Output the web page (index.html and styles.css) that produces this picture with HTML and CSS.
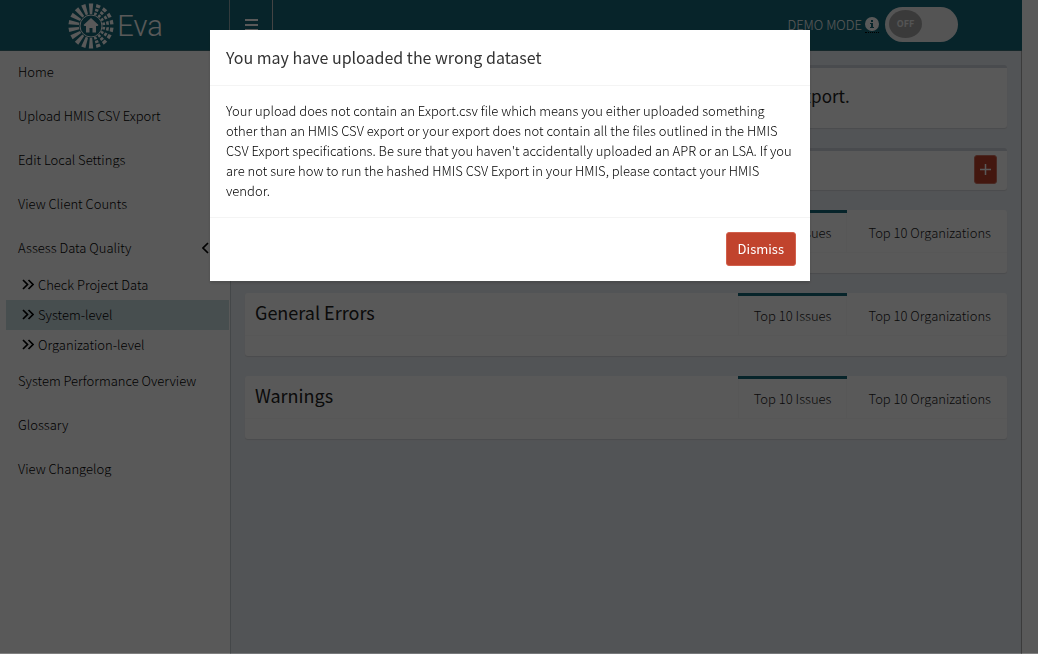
FILE: index.html
```html
<!DOCTYPE html>
<html lang="en">
<head>
<meta charset="utf-8">
<title>Eva</title>
<link rel="stylesheet" href="styles.css">
</head>
<body>
<div class="app">
  <header class="topbar">
    <a class="logo" href="#">
      <svg class="logo-mark" viewBox="-23 -23 46 46" aria-hidden="true">
        <defs>
          <path id="ray" d="M-1.2-12L-2.2-22.5H2.2L1.2-12Z"/>
          <path id="split" d="M-1.2-11.5L-1.4-14.2H1.4L1.2-11.5ZM-1.5-15.4L-1.8-18H1.8L1.5-15.4ZM-1.9-19.2L-2.3-22.5H2.3L1.9-19.2Z"/>
        </defs>
        <circle r="11" fill="none" stroke="#fff" stroke-width="1"/>
        <g fill="#fff">
          <use href="#ray"/>
          <use href="#split" transform="rotate(20)"/>
          <use href="#split" transform="rotate(40)"/>
          <use href="#split" transform="rotate(60)"/>
          <use href="#split" transform="rotate(80)"/>
          <use href="#split" transform="rotate(100)"/>
          <use href="#split" transform="rotate(120)"/>
          <use href="#split" transform="rotate(140)"/>
          <use href="#split" transform="rotate(160)"/>
          <use href="#ray" transform="rotate(180)"/>
          <use href="#ray" transform="rotate(200)"/>
          <use href="#ray" transform="rotate(220)"/>
          <use href="#ray" transform="rotate(240)"/>
          <use href="#ray" transform="rotate(260)"/>
          <use href="#ray" transform="rotate(280)"/>
          <use href="#ray" transform="rotate(300)"/>
          <use href="#ray" transform="rotate(320)"/>
          <use href="#ray" transform="rotate(340)"/>
          <path d="M0-8L7.5-1L6.5 0H5V6.5H1.5V2H-1.5V6.5H-5V0H-6.5L-7.5-1Z"/>
        </g>
      </svg>
      <span>Eva</span>
    </a>
    <button class="menu-toggle" type="button" aria-label="Toggle navigation">
      <svg viewBox="0 0 13 12" aria-hidden="true"><path fill="#fff" d="M0 0h13v2H0zM0 5h13v2H0zM0 10h13v2H0z"/></svg>
    </button>
    <div class="demo">
      <label for="demo-mode">DEMO MODE</label>
      <span class="info">
        <svg viewBox="0 0 14 14" aria-hidden="true"><circle cx="7" cy="7" r="7" fill="#fff"/><path fill="#16697a" d="M6 3h2v2H6zM5 6h3v4h1v1H5v-1h1V7H5z"/></svg>
      </span>
      <span class="switch">
        <input type="checkbox" id="demo-mode">
        <span class="knob">OFF</span>
      </span>
    </div>
  </header>

  <div class="columns">
    <nav class="sidebar">
      <a href="#">Home</a>
      <a href="#">Upload HMIS CSV Export</a>
      <a href="#">Edit Local Settings</a>
      <a href="#">View Client Counts</a>
      <a class="parent" href="#">Assess Data Quality
        <svg class="chevron" viewBox="0 0 7 12" aria-hidden="true"><path d="M6 1L1 6L6 11"/></svg>
      </a>
      <div class="submenu">
        <a href="#"><svg viewBox="0 0 12 11" aria-hidden="true"><path d="M1 1L5.5 5.5L1 10M6.5 1L11 5.5L6.5 10"/></svg>Check Project Data</a>
        <a class="active" href="#"><svg viewBox="0 0 12 11" aria-hidden="true"><path d="M1 1L5.5 5.5L1 10M6.5 1L11 5.5L6.5 10"/></svg>System-level</a>
        <a href="#"><svg viewBox="0 0 12 11" aria-hidden="true"><path d="M1 1L5.5 5.5L1 10M6.5 1L11 5.5L6.5 10"/></svg>Organization-level</a>
      </div>
      <a href="#">System Performance Overview</a>
      <a href="#">Glossary</a>
      <a href="#">View Changelog</a>
    </nav>

    <main class="content">
      <section class="card notice">You have not successfully uploaded an HMIS CSV Export.</section>
      <section class="card collapsed">
        <button class="expand" type="button" aria-label="Expand">
          <svg viewBox="0 0 11 11" aria-hidden="true"><path fill="none" stroke="#fff" stroke-width="1.5" d="M5.5 0V11M0 5.5H11"/></svg>
        </button>
      </section>
      <section class="card tabs">
        <div class="tab-head">
          <h2></h2>
          <a class="tab current" href="#">Top 10 Issues</a>
          <a class="tab" href="#">Top 10 Organizations</a>
        </div>
      </section>
      <section class="card tabs">
        <div class="tab-head">
          <h2>General Errors</h2>
          <a class="tab current" href="#">Top 10 Issues</a>
          <a class="tab" href="#">Top 10 Organizations</a>
        </div>
      </section>
      <section class="card tabs">
        <div class="tab-head">
          <h2>Warnings</h2>
          <a class="tab current" href="#">Top 10 Issues</a>
          <a class="tab" href="#">Top 10 Organizations</a>
        </div>
      </section>
    </main>
  </div>
</div>

<div class="backdrop">
  <div class="modal" role="dialog" aria-modal="true" aria-labelledby="modal-title">
    <h4 class="modal-title" id="modal-title">You may have uploaded the wrong dataset</h4>
    <p class="modal-body">Your upload does not contain an Export.csv file which means you either uploaded something other than an HMIS CSV export or your export does not contain all the files outlined in the HMIS CSV Export specifications. Be sure that you haven't accidentally uploaded an APR or an LSA. If you are not sure how to run the hashed HMIS CSV Export in your HMIS, please contact your HMIS vendor.</p>
    <div class="modal-footer"><button class="dismiss" type="button">Dismiss</button></div>
  </div>
</div>
</body>
</html>
```
FILE: styles.css
```css
* { box-sizing: border-box; }

body {
  margin: 0;
  background: #fff;
  color: #222;
  font: 300 13px/20px "Noto Sans CJK SC", "Noto Sans", sans-serif;
}

a { color: inherit; text-decoration: none; }
button { font: inherit; cursor: pointer; }
svg { display: block; }

.app {
  display: flex;
  flex-direction: column;
  min-height: 100vh;
  margin-right: 16px;
  border-right: 1px solid #aaa;
}

/* Top bar */
.topbar {
  display: flex;
  height: 51px;
  margin-right: -1px;
  background: #16697a;
  border-bottom: 1px solid #3c6f7a;
  color: #fff;
}

.logo {
  display: flex;
  align-items: center;
  justify-content: center;
  gap: 3px;
  width: 230px;
  padding: 2px 0 0 2px;
  border-right: 1px solid #8fa9ae;
  font: 300 29px/50px Roboto, sans-serif;
}
.logo-mark { width: 46px; height: 46px; }

.menu-toggle {
  display: flex;
  align-items: center;
  justify-content: center;
  width: 43px;
  padding: 0;
  border: 0;
  border-right: 1px solid #c4c4c4;
  background: none;
}
.menu-toggle svg { width: 13px; height: 12px; }

.demo {
  display: flex;
  align-items: center;
  gap: 3px;
  margin-left: auto;
  padding-right: 64px;
}
.info { padding-bottom: 1px; border-bottom: 1px dotted #000; }
.info svg { width: 14px; height: 14px; }

.switch {
  position: relative;
  display: block;
  width: 73px;
  height: 35px;
  margin: 0 0 2px 3px;
}
.switch input {
  appearance: none;
  display: block;
  width: 100%;
  height: 100%;
  margin: 0;
  border-radius: 18px;
  background: #f0f0f0;
}
.knob {
  position: absolute;
  top: 3px;
  left: 4px;
  width: 33px;
  height: 28px;
  border-radius: 50%;
  background: #a6a6a6;
  color: #f0f0f0;
  font-size: 9px;
  font-weight: 700;
  line-height: 28px;
  text-align: center;
  pointer-events: none;
}

/* Sidebar */
.columns { display: flex; flex: 1; }

.sidebar {
  display: flex;
  flex-direction: column;
  width: 231px;
  border-right: 1px solid #c4ccd0;
  color: #000;
}
.sidebar a { padding: 11px 18px 13px; }
.sidebar .parent {
  display: flex;
  align-items: center;
  justify-content: space-between;
  padding-bottom: 12px;
}
.chevron { width: 7px; height: 12px; margin-right: 3px; }
.sidebar path { fill: none; stroke: #000; stroke-width: 1.7; }

.submenu { padding: 0 1px 0 6px; }
.sidebar .submenu a {
  display: flex;
  align-items: center;
  gap: 4px;
  height: 30px;
  padding: 0 16px 1px;
}
.submenu svg { width: 12px; height: 11px; }
.sidebar .submenu .active { background: #ccdfe3; }

/* Content */
.content {
  flex: 1;
  display: flex;
  flex-direction: column;
  gap: 20px;
  padding: 14px;
  background: #ecf0f5;
}
.card {
  border-radius: 3px;
  background: #fff;
  box-shadow: 0 1px 1px rgba(0, 0, 0, .1);
}
.notice,
.collapsed { border-top: 3px solid #d2d6de; }
.notice {
  padding: 16px 5px 20px 10px;
  font-size: 17px;
  font-weight: 400;
  line-height: 24px;
  text-align: center;
}
.collapsed {
  display: flex;
  justify-content: flex-end;
  padding: 4px 10px 6px;
}
.expand {
  display: flex;
  align-items: center;
  justify-content: center;
  width: 23px;
  height: 29px;
  padding: 0;
  border: 1px solid #d27361;
  border-radius: 3px;
  background: #c1432d;
}
.expand svg { width: 11px; height: 11px; }

.tabs { padding-bottom: 20px; }
.tab-head {
  display: flex;
  height: 43px;
  border-bottom: 1px solid #f8f8f8;
}
.tab-head h2 {
  flex: 1;
  margin: 0;
  padding-left: 10px;
  font-size: 18px;
  font-weight: 400;
  line-height: 38px;
}
.tab {
  margin-right: 5px;
  padding: 10px 16px;
  border-top: 3px solid transparent;
}
.tab:last-child { margin-right: 0; }
.current {
  border-top-color: #16697a;
  box-shadow: inset 1px 0 #f8f8f8, inset -1px 0 #f8f8f8;
}

/* Dialog */
.backdrop {
  position: fixed;
  inset: 0;
  padding: 30px 18px 30px 0;
  border-bottom: 1px solid rgba(0, 0, 0, .5);
  background: rgba(0, 0, 0, .65);
  background-clip: padding-box;
}
.modal {
  width: 600px;
  max-width: 100%;
  margin: 0 auto;
  background: #fff;
  box-shadow: 0 2px 3px rgba(0, 0, 0, .15);
}
.modal-title {
  margin: 0;
  padding: 15px 14px 15px 16px;
  border-bottom: 1px solid #f4f4f4;
  color: #333;
  font-size: 16px;
  font-weight: 400;
  line-height: 25px;
}
.modal-body { margin: 0; padding: 15px 14px 16px 16px; color: #000; }
.modal-footer {
  display: flex;
  justify-content: flex-end;
  padding: 14px 14px 15px;
  border-top: 1px solid #f4f4f4;
}
.dismiss {
  padding: 6px 11px;
  border: 1px solid #d2604c;
  border-radius: 3px;
  background: #c1432d;
  color: #fff;
  font-weight: 400;
}
```
